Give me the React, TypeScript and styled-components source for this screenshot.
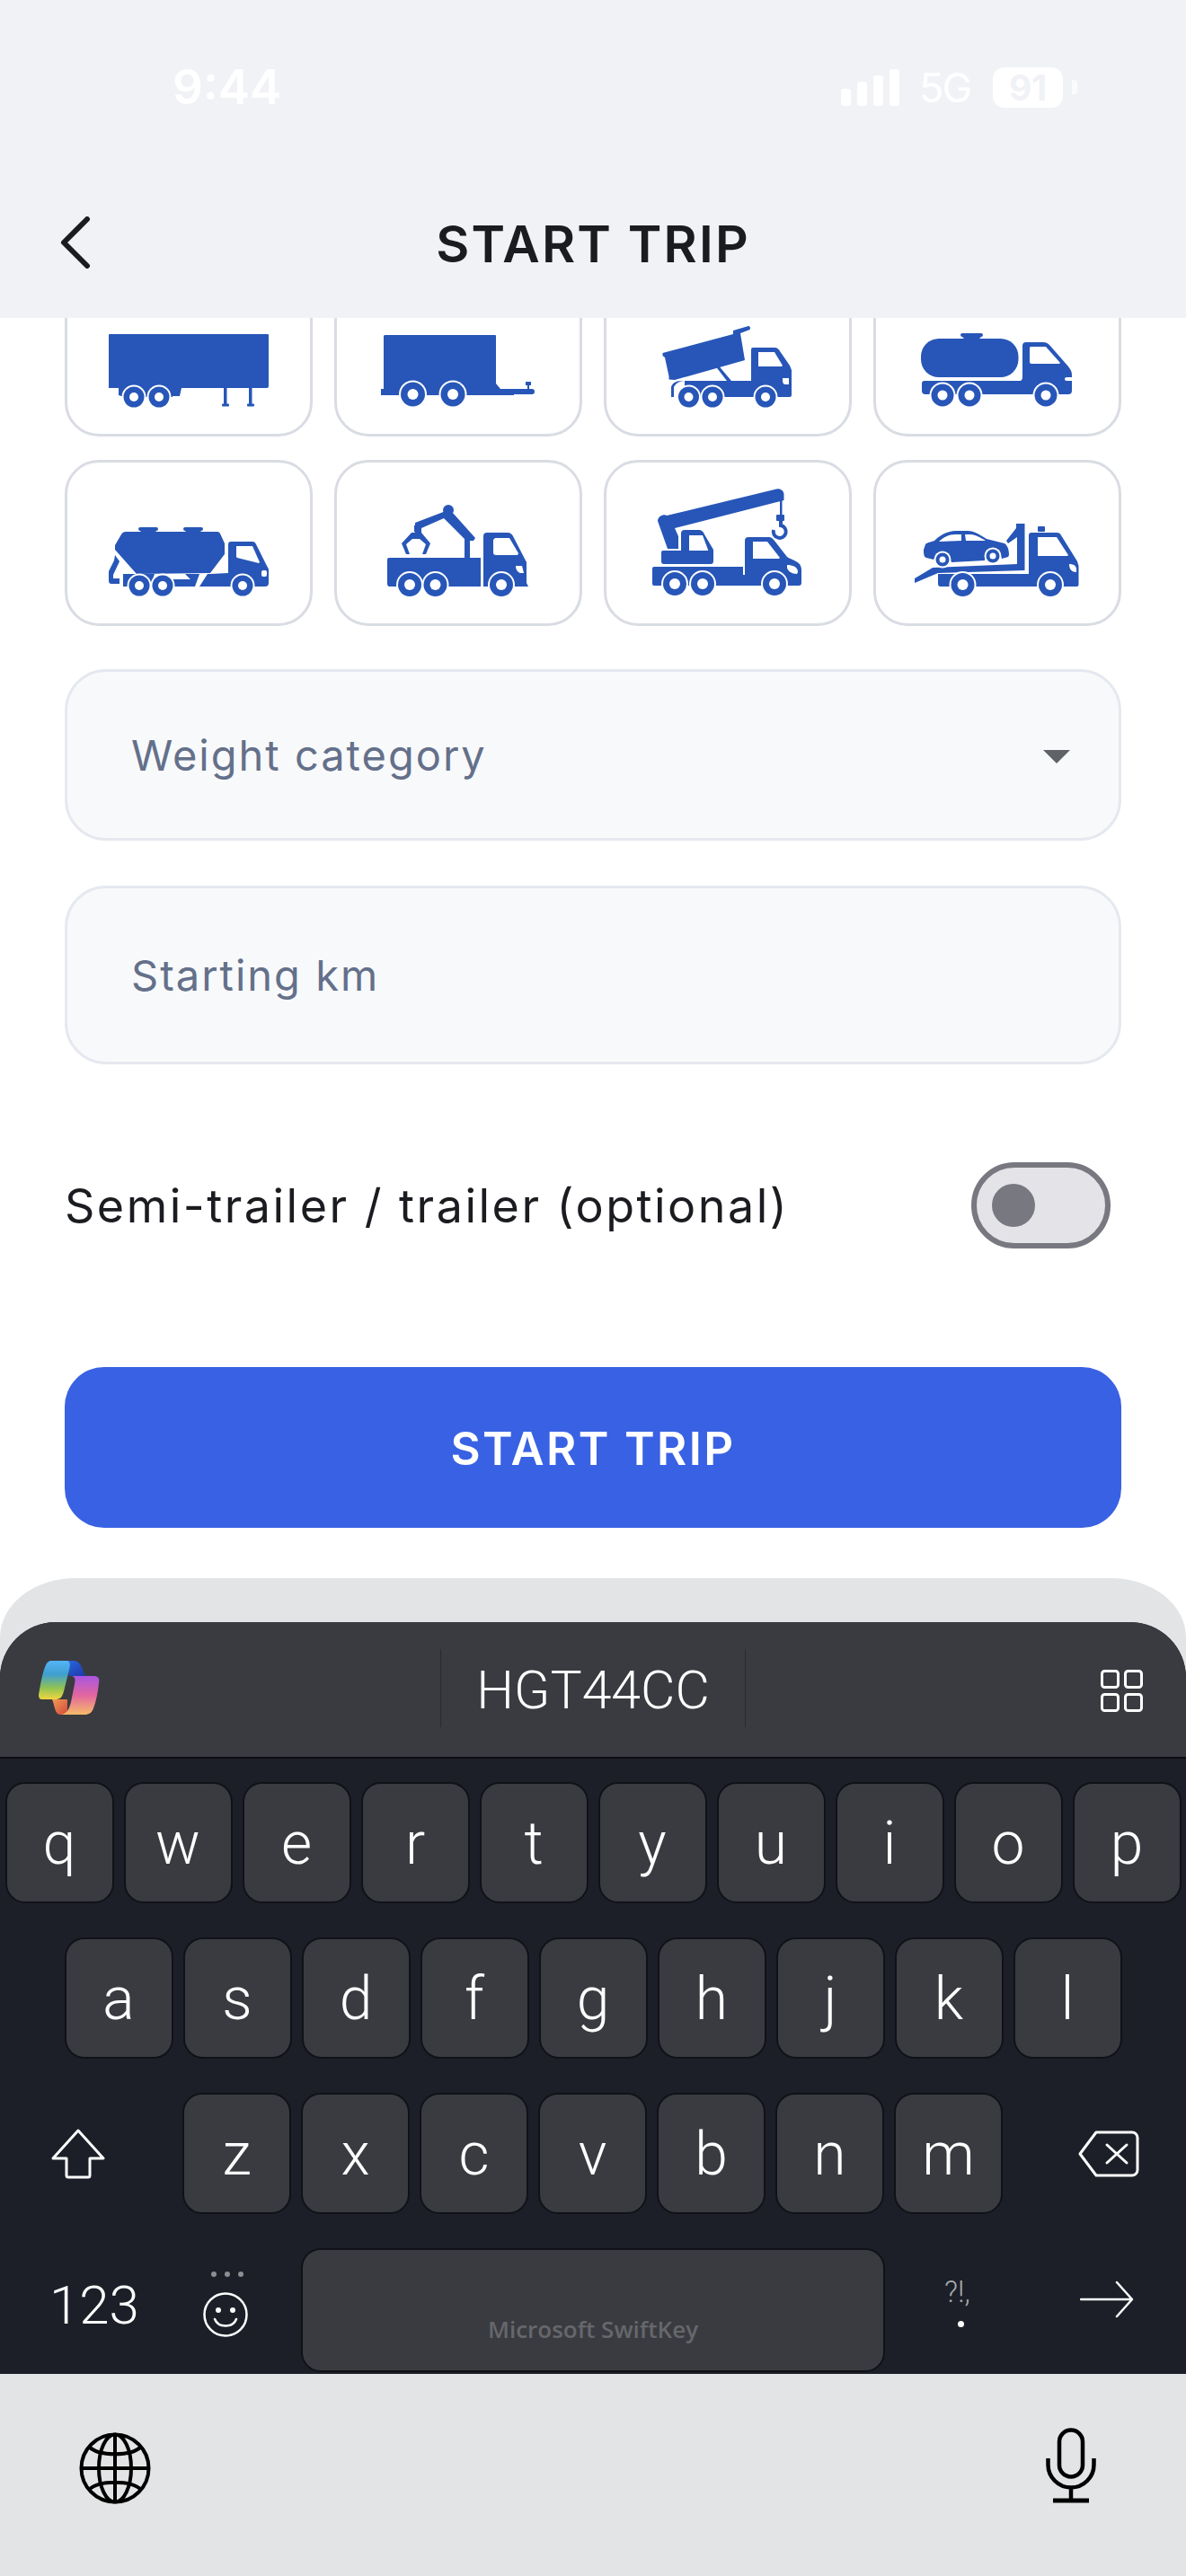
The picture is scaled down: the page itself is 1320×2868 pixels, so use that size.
import styled, { createGlobalStyle } from "styled-components";

const BLUE = "#2756b8";

const GlobalStyle = createGlobalStyle`
	html, body {
		margin: 0;
		padding: 0;
		background: #ffffff;
	}
	* {
		box-sizing: border-box;
	}
`;

const Page = styled.div`
	width: 1320px;
	height: 2868px;
	display: flex;
	flex-direction: column;
	overflow: hidden;
	background: #ffffff;
	font-family: "Inter", "Liberation Sans", sans-serif;
`;

const Header = styled.header`
	height: 354px;
	flex-shrink: 0;
	background: #f0f2f6;
	position: relative;
	z-index: 1;
`;

const StatusBar = styled.div`
	height: 186px;
	padding: 8px 121px 0 192px;
	display: flex;
	align-items: center;
	justify-content: space-between;
	color: #ffffff;
`;

const Clock = styled.span`
	font-size: 53px;
	font-weight: 600;
`;

const StatusRight = styled.div`
	display: flex;
	align-items: center;
`;

const Network = styled.span`
	font-size: 45px;
	font-weight: 400;
	letter-spacing: -2px;
	margin: 0 25px 0 22px;
`;

const Battery = styled.span`
	width: 78px;
	height: 45px;
	border-radius: 13px;
	background: #ffffff;
	color: #f0f2f6;
	font-size: 39px;
	font-weight: 700;
	display: flex;
	align-items: center;
	justify-content: center;
`;

const BatteryTip = styled.span`
	width: 6px;
	height: 16px;
	margin-left: 10px;
	border-radius: 0 4px 4px 0;
	background: #ffffff;
	opacity: 0.7;
`;

const NavBar = styled.div`
	height: 168px;
	display: grid;
	grid-template-columns: 1fr auto 1fr;
	align-items: center;
	padding: 0 66px;
`;

const Title = styled.h1`
	margin: 0 0 -2px;
	font-size: 57px;
	font-weight: 600;
	letter-spacing: 2.2px;
	color: #1a1c20;
`;

const Content = styled.main`
	padding: 0 72px;
	height: 1403px;
	flex-shrink: 0;
	overflow: hidden;
`;

const VehicleGrid = styled.div`
	margin-top: -53px;
	display: grid;
	grid-template-columns: repeat(4, 276px);
	grid-auto-rows: 185px;
	gap: 26px 24px;
`;

const VehicleCard = styled.div`
	border: 3px solid #d9dce3;
	border-radius: 38px;
	background: #ffffff;
	overflow: hidden;
`;

const VehicleSvg = styled.svg`
	display: block;
	margin: -3px;
	width: 276px;
	height: 185px;
	fill: ${BLUE};
`;

const Field = styled.div<{ $height: number; $top: number }>`
	height: ${(p) => p.$height}px;
	margin-top: ${(p) => p.$top}px;
	padding: 0 54px 0 71px;
	display: flex;
	align-items: center;
	justify-content: space-between;
	background: #f8f9fb;
	border: 3px solid #e6e8f0;
	border-radius: 46px;
	font-size: 47px;
	letter-spacing: 2px;
	color: #64708a;
`;

const Caret = styled.span`
	width: 0;
	height: 0;
	margin-top: 4px;
	border-left: 15px solid transparent;
	border-right: 15px solid transparent;
	border-top: 15px solid #5f6368;
`;

const ToggleRow = styled.div`
	height: 96px;
	margin-top: 109px;
	padding-right: 12px;
	display: flex;
	align-items: center;
	justify-content: space-between;
	font-size: 52px;
	letter-spacing: 2.5px;
	color: #1a1c20;
`;

const Toggle = styled.div`
	width: 155px;
	height: 96px;
	padding-left: 17px;
	display: flex;
	align-items: center;
	background: #e3e3e8;
	border: 6px solid #787880;
	border-radius: 48px;
`;

const Knob = styled.span`
	width: 48px;
	height: 48px;
	border-radius: 50%;
	background: #787880;
`;

const StartButton = styled.button`
	display: block;
	width: 100%;
	height: 179px;
	margin-top: 132px;
	padding-top: 3px;
	border: 0;
	border-radius: 44px;
	background: #3961e3;
	color: #ffffff;
	font-family: inherit;
	font-size: 51px;
	font-weight: 600;
	letter-spacing: 2.4px;
`;

const KeyboardSheet = styled.section`
	flex: 1;
	padding-top: 49px;
	display: flex;
	flex-direction: column;
	background: #e3e4e6;
	border-radius: 84px 84px 0 0 / 66px 66px 0 0;
`;

const Keyboard = styled.div`
	height: 837px;
	flex-shrink: 0;
	display: flex;
	flex-direction: column;
	background: #1c1f28;
	border-radius: 62px 62px 0 0;
	overflow: hidden;
	font-family: "Roboto", "Liberation Sans", sans-serif;
	font-weight: 300;
	color: #ffffff;
`;

const Suggestions = styled.div`
	height: 152px;
	flex-shrink: 0;
	display: grid;
	grid-template-columns: 490px 340px 1fr;
	align-items: center;
	background: #3a3b40;
	border-bottom: 2px solid #0c0d11;
	padding-bottom: 4px;
`;

const SuggestionSide = styled.div<{ $end?: boolean }>`
	display: flex;
	justify-content: ${(p) => (p.$end ? "flex-end" : "flex-start")};
	padding: ${(p) => (p.$end ? "6px 48px 0 0" : "0 0 0 43px")};
`;

const Suggestion = styled.div`
	height: 87px;
	padding-top: 4px;
	display: flex;
	align-items: center;
	justify-content: center;
	border-left: 1px solid #2a2b30;
	border-right: 1px solid #2a2b30;
	font-size: 59px;
`;

const KeyRows = styled.div`
	padding-top: 26px;
	display: flex;
	flex-direction: column;
	gap: 38px;
`;

const KeyRow = styled.div`
	height: 135px;
	display: flex;
	justify-content: center;
	gap: 11px;
`;

const Key = styled.div`
	width: 121px;
	height: 135px;
	padding-top: 2px;
	display: flex;
	align-items: center;
	justify-content: center;
	background: #3a3b40;
	border: 2px solid #101218;
	border-radius: 22px;
	font-size: 66px;
`;

const ShiftRow = styled.div`
	height: 135px;
	display: grid;
	grid-template-columns: 203px 913px 1fr;
	align-items: center;
`;

const ShiftKeys = styled.div`
	display: flex;
	gap: 11px;
`;

const Slot = styled.div<{ $left: number; $raise?: number }>`
	padding-left: ${(p) => p.$left}px;
	padding-bottom: ${(p) => p.$raise ?? 0}px;
	display: flex;
	align-items: center;
`;

const BottomRow = styled.div`
	height: 138px;
	display: grid;
	grid-template-columns: 205px 130px 650px 145px 1fr;
	align-items: center;
`;

const NumbersKey = styled.div`
	padding: 0 0 10px 55px;
	font-size: 60px;
	line-height: 1;
`;

const EmojiKey = styled.div`
	padding: 0 0 14px 21px;
	display: flex;
	flex-direction: column;
	align-items: flex-start;
`;

const MoreDots = styled.span`
	display: flex;
	gap: 9px;
	margin: 0 0 17px 9px;
`;

const MoreDot = styled.i`
	width: 6px;
	height: 6px;
	border-radius: 50%;
	background: #8d8e92;
`;

const SpaceKey = styled.div`
	height: 138px;
	padding-top: 42px;
	display: flex;
	align-items: center;
	justify-content: center;
	background: #3a3b40;
	border: 2px solid #101218;
	border-radius: 22px;
	font-family: "Open Sans", "Liberation Sans", sans-serif;
	font-size: 26px;
	font-weight: 600;
	color: #66676c;
`;

const PunctuationKey = styled.div`
	padding: 0 0 18px 66px;
	display: flex;
	flex-direction: column;
	align-items: flex-start;
	font-size: 33px;
	line-height: 1;
	color: #a6a7aa;
`;

const PeriodDot = styled.span`
	width: 7px;
	height: 7px;
	margin: 16px 0 0 15px;
	border-radius: 50%;
	background: #ffffff;
`;

const SystemBar = styled.div`
	flex: 1;
	padding: 60px 100px 0 88px;
	display: flex;
	justify-content: space-between;
	align-items: flex-start;
`;

const GlobeSlot = styled.div`
	margin-top: 5px;
	display: flex;
`;

const Wheel = ({ x, y, r = 13, hole = 6 }: { x: number; y: number; r?: number; hole?: number }) => (
	<>
		<circle cx={x} cy={y} r={r + 2} fill="#fff" />
		<circle cx={x} cy={y} r={r} />
		<circle cx={x} cy={y} r={hole} fill="#fff" />
	</>
);

const Vehicle = ({ children }: { children: React.ReactNode }) => (
	<VehicleCard>
		<VehicleSvg viewBox="0 0 276 185">{children}</VehicleSvg>
	</VehicleCard>
);

const Trailer = () => (
	<Vehicle>
		<path d="M50 71H226a1 1 0 0 1 1 1V129a2 2 0 0 1-2 2H130l-2 9h-8V141H66l-6-2V131H49V72a1 1 0 0 1 1-1Z" />
		<rect x="177" y="131" width="3.5" height="18" />
		<rect x="205" y="131" width="3.5" height="18" />
		<rect x="175" y="148.5" width="8" height="3" rx="1" />
		<rect x="203" y="148.5" width="8" height="3" rx="1" />
		<Wheel x={77} y={141} r={11.5} hole={5} />
		<Wheel x={105} y={141} r={11.5} hole={5} />
	</Vehicle>
);

const BoxTrailer = () => (
	<Vehicle>
		<path d="M56 72H179a1 1 0 0 1 1 1V126l5 6H215V128h-2V124h6v4h-2v4h3a2.500 2.500 0 0 1 0 6H200v1H52V132h3V73Z" />
		<Wheel x={87.500} y={138} r={13.500} hole={6} />
		<Wheel x={132} y={138} r={13.500} hole={6} />
	</Vehicle>
);

const Tipper = () => (
	<Vehicle>
		<path d="M65.500 92L144 71V67L161 62c2 0 2.500 3 1.500 4L152 70L157 100L79 122L72.500 121.500V118L68 97L65.500 95Z" />
		<path d="M125 107.500h4L142 123H137Z" />
		<path d="M166 86H190C193 86 195 88 196 90L207 106L209 111V139A2 2 0 0 1 207 141H166V123H164H90C84 123 80 126 78 130V141H75V130C76 126 80 123 86 123H164V88A2 2 0 0 1 166 86Z" />
		<path d="M90 123H166V141H90Z" />
		<path d="M172 91H190L199 106 198 107H172Z" fill="#fff" />
		<path d="M199 120H206V127H202C200 127 199 125 199 123Z" fill="#fff" />
		<Wheel x={94.500} y={141} r={11.500} hole={5} />
		<Wheel x={121} y={141} r={11.500} hole={5} />
		<Wheel x={180} y={141} r={11.500} hole={5} />
	</Vehicle>
);

const Tanker = () => (
	<Vehicle>
		<rect x="53" y="76" width="108.500" height="43" rx="20" />
		<path d="M99 70H120a1.500 1.500 0 0 1 0 4L117 77H102L99 74a1.500 1.500 0 0 1 0-4Z" />
		<path d="M170 80H189C192 80 194 81 196 83L217 107C220 111 221 113 221 117V119H215A2 2 0 0 0 215 123H221V134A4 4 0 0 1 217 138H58A4 4 0 0 1 54 134V126A3 3 0 0 1 57 123H163C165 123 166 121 166 119V84A4 4 0 0 1 170 80Z" />
		<path d="M175 85H192L208 103 207 104H176A2 2 0 0 1 174 102V86Z" fill="#fff" />
		<Wheel x={77} y={139} r={12.500} hole={5.500} />
		<Wheel x={107} y={139} r={12.500} hole={5.500} />
		<Wheel x={192} y={139} r={12.500} hole={5.500} />
	</Vehicle>
);

const SiloTruck = () => (
	<Vehicle>
		<path d="M68 80H170C172 80 172 81 173 82L178 93V105L162 126L80 127L56 100V95L63 83C64 81 66 80 68 80Z" />
		<path d="M84 75H102a2 2 0 0 1 0 4L101 80H85L84 79a2 2 0 0 1 0-4ZM134 75H152a2 2 0 0 1 0 4L151 80H135L134 79a2 2 0 0 1 0-4Z" />
		<path d="M56 106L61 113L54 128V132H61V138H52C50 138 49 137 49 134V124L55 112Z" />
		<path d="M65 127H100L98 133H140L134 127H150L145 141H65Z" />
		<path d="M150 141L159 127H162L182 126V94A3 3 0 0 1 185 91H209C211 91 212 92 213 94L225 118C226 120 227 120 227 123V137A4 4 0 0 1 223 141Z" />
		<path d="M191 96H209L217 114 216 115 192 109 191 108Z" fill="#fff" />
		<rect x="219" y="123" width="6" height="7" rx="2" fill="#fff" />
		<Wheel x={83} y={140} r={11.500} hole={5} />
		<Wheel x={109} y={140} r={11.500} hole={5} />
		<Wheel x={198} y={140} r={11.500} hole={5} />
	</Vehicle>
);

const GrappleTruck = () => (
	<Vehicle>
		<path d="M61 109H145V85L148 84L133 63L125 60L89 73V80L91 81V74L121 63L151 89V109H163V141H61A3 3 0 0 1 59 138V111A2 2 0 0 1 61 109Z" />
		<path d="M124 57L90 70V82H97V76L122 65L147 90H155L157 87L131 58Z" />
		<circle cx="127" cy="56" r="6" />
		<path d="M86 81H97L107 93 102 105H98L102 94 95 88H87L80 94 84 105H80L75 93Z" />
		<path d="M170 81H193C196 81 198 83 199 85L214 114V137L216 141H166V85A4 4 0 0 1 170 81Z" />
		<path d="M179 87H195L205 104 204 106H180A3 3 0 0 1 177 103V89Z" fill="#fff" />
		<path d="M202 118H209L211 126 207 126C204 125 202 122 202 118Z" fill="#fff" />
		<rect x="164" y="109" width="2" height="26" fill="#fff" />
		<Wheel x={84} y={139} />
		<Wheel x={112.500} y={139} />
		<Wheel x={186} y={139} />
	</Vehicle>
);

const CraneTruck = () => (
	<Vehicle>
		<path d="M60 68C60 63 67 60 70 62L190 33C196 31 200 34 200.500 38V45L79 76L83 85V99H71Z" />
		<rect x="196" y="45" width="2.500" height="16" />
		<rect x="192" y="61" width="9" height="7" rx="1" />
		<path d="M197 68V73A7 7 0 1 1 189 78" fill="none" stroke={BLUE} strokeWidth="4" />
		<path d="M90 78H105C109 78 111 80 112 83L122 100V113A3 3 0 0 1 119 116H67A3 3 0 0 1 64 113V103A2 2 0 0 1 66 101H86V82A4 4 0 0 1 90 78Z" />
		<path d="M95 84H110L116 100V101H95Z" fill="#fff" />
		<path d="M56 119H155V127H157V90A4 4 0 0 1 161 86H183C187 86 188 88 190 90L204 108C210 112 220 113 220 122V137A3 3 0 0 1 217 140H56A2 2 0 0 1 54 138V121A2 2 0 0 1 56 119Z" />
		<path d="M166 91H182L196 109 195 110H166Z" fill="#fff" />
		<path d="M204 117C210 117 216 119 216 125L215 127C209 127 205 124 204 120Z" fill="#fff" />
		<rect x="155" y="122" width="2" height="6" fill="#fff" />
		<Wheel x={79} y={138} />
		<Wheel x={110} y={138} />
		<Wheel x={190} y={138} />
	</Vehicle>
);

const TowTruck = () => (
	<Vehicle>
		<path d="M72 127H173V84A3 3 0 0 1 176 81H204C207 81 208 82 209 84L227 113L228.500 118V139A2 2 0 0 1 226.500 141H74A3 3 0 0 1 72 138Z" />
		<path d="M183 86H204L217 106 216 107H183Z" fill="#fff" />
		<rect x="183" y="74" width="8" height="6" rx="1" />
		<path d="M218 116C223 116 226 118 226 122V125C221 125 218 122 218 116Z" fill="#fff" />
		<path d="M46 132L66 120L160 116V86L150 93L148 90L159 76V71H168.500V123L72 126L46 137Z" />
		<path d="M58 94C60 92 65 91 68 90C74 84 82 79 92 79H105C112 79 120 84 126 88L146 93C149 95 151 99 151 106L150 108L143 110C141 101 126 100 124 112L87 114C85 106 70 104 67 111L59 109C56 108 56 104 56 100Z" />
		<path d="M73 91C78 86 84 83 91 83H98V90ZM102 83H108C114 83 120 87 125 90L103 90Z" fill="#fff" />
		<Wheel x={77} y={111} r={7.500} hole={3.500} />
		<Wheel x={133} y={107} r={7.500} hole={3.500} />
		<Wheel x={99.500} y={139} />
		<Wheel x={197} y={139} />
	</Vehicle>
);

const SignalIcon = () => (
	<svg width="65" height="41" viewBox="0 0 65 41" fill="#fff">
		<rect x="0" y="22" width="11" height="19" rx="3" />
		<rect x="18" y="14" width="11" height="27" rx="3" />
		<rect x="36" y="7" width="11" height="34" rx="3" />
		<rect x="54" y="0" width="11" height="41" rx="3" />
	</svg>
);

const ChevronIcon = () => (
	<svg width="36" height="58" viewBox="0 0 36 58" fill="none" stroke="#1a1c20" strokeWidth="6" strokeLinecap="round" strokeLinejoin="round">
		<path d="M31 3L5 29L31 55" />
	</svg>
);

const CopilotLogo = () => (
	<svg width="68" height="60" viewBox="0 0 68 60">
		<defs>
			<linearGradient id="copilotLeft" x1="0" y1="0" x2="0" y2="1">
				<stop offset="0" stopColor="#53b4f7" />
				<stop offset="0.35" stopColor="#3f9fd0" />
				<stop offset="0.7" stopColor="#8fc255" />
				<stop offset="1" stopColor="#f2d640" />
			</linearGradient>
			<linearGradient id="copilotRight" x1="0" y1="0" x2="0" y2="1">
				<stop offset="0" stopColor="#a956e2" />
				<stop offset="0.5" stopColor="#e2669f" />
				<stop offset="1" stopColor="#f8bb68" />
			</linearGradient>
			<linearGradient id="copilotTop" x1="0" y1="0" x2="1" y2="1">
				<stop offset="0" stopColor="#2b6be0" />
				<stop offset="1" stopColor="#1c36a8" />
			</linearGradient>
			<linearGradient id="copilotBottom" x1="0" y1="0" x2="1" y2="1">
				<stop offset="0" stopColor="#f49a56" />
				<stop offset="1" stopColor="#d24a3a" />
			</linearGradient>
		</defs>
		<path d="M28 0H39C46 0 48 7 50 12C51 15 52 17 54 17H34C33 10 32 3 28 0Z" fill="url(#copilotTop)" />
		<path d="M15 43H32V60H24C18 60 18 50 15 43Z" fill="url(#copilotBottom)" />
		<path d="M14 0H32C36 1 35 6 33 14L28 34C26 41 24 43 18 43H4C1 43 0 41 0 38C2 26 4 15 7 7C9 2 11 0 14 0Z" fill="url(#copilotLeft)" />
		<path d="M37 17H61C66 17 68 19 67 25C66 35 64 45 61 53C59 58 56 60 51 60H25C31 59 34 54 36 46L40 26C41 21 41 18 37 17Z" fill="url(#copilotRight)" />
	</svg>
);

const GridIcon = () => (
	<svg width="47" height="47" viewBox="0 0 47 47" fill="none" stroke="#fff" strokeWidth="3">
		<rect x="1.500" y="1.500" width="18" height="18" rx="3" />
		<rect x="27.500" y="1.500" width="18" height="18" rx="3" />
		<rect x="1.500" y="27.500" width="18" height="18" rx="3" />
		<rect x="27.500" y="27.500" width="18" height="18" rx="3" />
	</svg>
);

const ShiftIcon = () => (
	<svg width="60" height="56" viewBox="0 0 60 56" fill="none" stroke="#fff" strokeWidth="3" strokeLinejoin="round">
		<path d="M30 2L58 33H43V52A2 2 0 0 1 41 54H19A2 2 0 0 1 17 52V33H2Z" />
	</svg>
);

const BackspaceIcon = () => (
	<svg width="68" height="52" viewBox="0 0 68 52" fill="none" stroke="#fff" strokeWidth="3" strokeLinecap="round" strokeLinejoin="round">
		<path d="M20 2H60A6 6 0 0 1 66 8V44A6 6 0 0 1 60 50H20L2 26Z" />
		<path d="M32 16L54 36M54 16L32 36" />
	</svg>
);

const SmileIcon = () => (
	<svg width="50" height="50" viewBox="0 0 50 50" fill="none" stroke="#fff" strokeWidth="2.500" strokeLinecap="round">
		<circle cx="25" cy="25" r="23.500" />
		<circle cx="17" cy="20" r="3" fill="#fff" stroke="none" />
		<circle cx="33" cy="20" r="3" fill="#fff" stroke="none" />
		<path d="M13 30C17 40 33 40 37 30" />
	</svg>
);

const ArrowIcon = () => (
	<svg width="60" height="42" viewBox="0 0 60 42" fill="none" stroke="#fff" strokeWidth="2.500" strokeLinecap="round" strokeLinejoin="round">
		<path d="M1 21H58M41 2L58 21L41 40" />
	</svg>
);

const GlobeIcon = () => (
	<svg width="80" height="80" viewBox="0 0 80 80" fill="none" stroke="#000" strokeWidth="4">
		<circle cx="40" cy="40" r="37.500" />
		<ellipse cx="40" cy="40" rx="18" ry="37.500" />
		<path d="M40 2V78M2 40H78M11 16C22 27 58 27 69 16M11 64C22 53 58 53 69 64" />
	</svg>
);

const MicIcon = () => (
	<svg width="56" height="84" viewBox="0 0 56 84" fill="none" stroke="#000" strokeWidth="4.500">
		<rect x="15" y="2.500" width="26" height="52" rx="13" />
		<path d="M2.500 34V41A25.500 25.500 0 0 0 53.500 41V34M28 66V80" />
		<path d="M8 81H48" strokeWidth="5" />
	</svg>
);

const ROW_ONE = "qwertyuiop".split("");
const ROW_TWO = "asdfghjkl".split("");
const ROW_THREE = "zxcvbnm".split("");

function App() {
	return (
		<Page>
			<GlobalStyle />
			<Header>
				<StatusBar>
					<Clock>9:44</Clock>
					<StatusRight>
						<SignalIcon />
						<Network>5G</Network>
						<Battery>91</Battery>
						<BatteryTip />
					</StatusRight>
				</StatusBar>
				<NavBar>
					<ChevronIcon />
					<Title>START TRIP</Title>
				</NavBar>
			</Header>
			<Content>
				<VehicleGrid>
					<Trailer />
					<BoxTrailer />
					<Tipper />
					<Tanker />
					<SiloTruck />
					<GrappleTruck />
					<CraneTruck />
					<TowTruck />
				</VehicleGrid>
				<Field $height={191} $top={48}>
					Weight category
					<Caret />
				</Field>
				<Field $height={199} $top={50}>
					Starting km
				</Field>
				<ToggleRow>
					Semi-trailer / trailer (optional)
					<Toggle>
						<Knob />
					</Toggle>
				</ToggleRow>
				<StartButton>START TRIP</StartButton>
			</Content>
			<KeyboardSheet>
				<Keyboard>
					<Suggestions>
						<SuggestionSide>
							<CopilotLogo />
						</SuggestionSide>
						<Suggestion>HGT44CC</Suggestion>
						<SuggestionSide $end>
							<GridIcon />
						</SuggestionSide>
					</Suggestions>
					<KeyRows>
						<KeyRow>
							{ROW_ONE.map((letter) => (
								<Key key={letter}>{letter}</Key>
							))}
						</KeyRow>
						<KeyRow>
							{ROW_TWO.map((letter) => (
								<Key key={letter}>{letter}</Key>
							))}
						</KeyRow>
						<ShiftRow>
							<Slot $left={57}>
								<ShiftIcon />
							</Slot>
							<ShiftKeys>
								{ROW_THREE.map((letter) => (
									<Key key={letter}>{letter}</Key>
								))}
							</ShiftKeys>
							<Slot $left={84}>
								<BackspaceIcon />
							</Slot>
						</ShiftRow>
						<BottomRow>
							<NumbersKey>123</NumbersKey>
							<EmojiKey>
								<MoreDots>
									<MoreDot />
									<MoreDot />
									<MoreDot />
								</MoreDots>
								<SmileIcon />
							</EmojiKey>
							<SpaceKey>Microsoft SwiftKey</SpaceKey>
							<PunctuationKey>
								?!,
								<PeriodDot />
							</PunctuationKey>
							<Slot $left={72} $raise={24}>
								<ArrowIcon />
							</Slot>
						</BottomRow>
					</KeyRows>
				</Keyboard>
				<SystemBar>
					<GlobeSlot>
						<GlobeIcon />
					</GlobeSlot>
					<MicIcon />
				</SystemBar>
			</KeyboardSheet>
		</Page>
	);
}

export default App;
